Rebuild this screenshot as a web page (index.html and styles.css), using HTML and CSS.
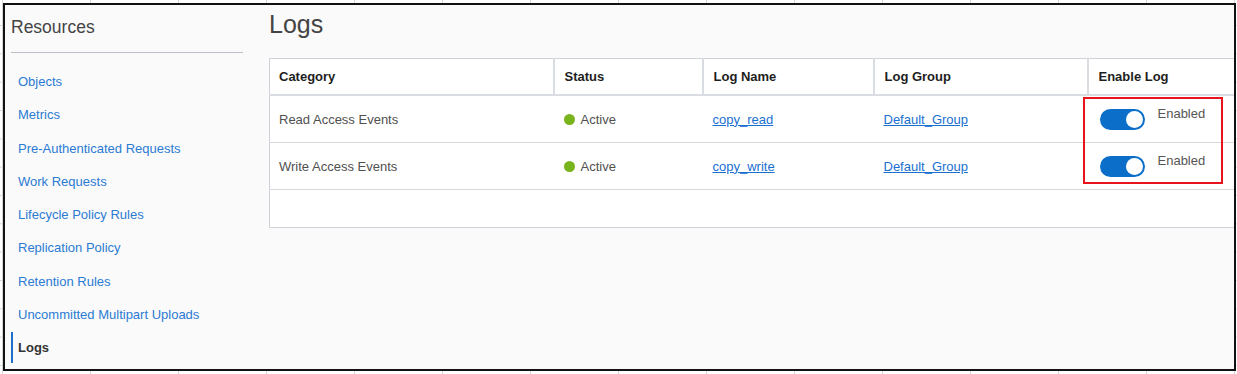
FILE: index.html
```html
<!DOCTYPE html>
<html lang="en">
<head>
  <meta charset="UTF-8">
  <title>Logs - Bucket Resources</title>
  <link rel="stylesheet" href="styles.css">
</head>
<body>
  <div class="frame">
    <!-- Resources side menu -->
    <aside class="sidebar">
      <h2 class="side-title">Resources</h2>
      <nav class="side-nav">
        <a href="#">Objects</a>
        <a href="#">Metrics</a>
        <a href="#">Pre-Authenticated Requests</a>
        <a href="#">Work Requests</a>
        <a href="#">Lifecycle Policy Rules</a>
        <a href="#">Replication Policy</a>
        <a href="#">Retention Rules</a>
        <a href="#">Uncommitted Multipart Uploads</a>
        <a href="#" class="active">Logs</a>
      </nav>
    </aside>

    <main class="main">
      <h1 class="page-title">Logs</h1>
      <table class="logs-table">
        <colgroup>
          <col class="c-cat">
          <col class="c-status">
          <col class="c-name">
          <col class="c-group">
          <col class="c-enable">
        </colgroup>
        <thead>
          <tr>
            <th>Category</th>
            <th>Status</th>
            <th>Log Name</th>
            <th>Log Group</th>
            <th>Enable Log</th>
          </tr>
        </thead>
        <tbody>
          <tr>
            <td>Read Access Events</td>
            <td><span class="dot"></span>Active</td>
            <td><a href="#">copy_read</a></td>
            <td><a href="#">Default_Group</a></td>
            <td>
              <div class="enable">
                <span class="toggle"><span class="knob"></span></span>
                <span class="enable-label">Enabled</span>
              </div>
            </td>
          </tr>
          <tr>
            <td>Write Access Events</td>
            <td><span class="dot"></span>Active</td>
            <td><a href="#">copy_write</a></td>
            <td><a href="#">Default_Group</a></td>
            <td>
              <div class="enable">
                <span class="toggle"><span class="knob"></span></span>
                <span class="enable-label">Enabled</span>
              </div>
            </td>
          </tr>
          <tr class="empty-row">
            <td colspan="5"></td>
          </tr>
        </tbody>
      </table>
    </main>

    <!-- highlight box drawn over the toggles -->
    <div class="highlight"></div>
  </div>
</body>
</html>
```

FILE: styles.css
```css
html, body {
  margin: 0;
  padding: 0;
}
body {
  width: 1237px;
  height: 374px;
  overflow: hidden;
  font-family: "Liberation Sans", Arial, sans-serif;
  background-color: #fff;
  background-image:
    linear-gradient(to right, #d6d6d6 1px, transparent 1px),
    linear-gradient(to bottom, #d6d6d6 1px, transparent 1px);
  background-size: 88px 100%, 100% 28.33px;
  background-position: 2px 0, 0 -3.3px;
}
.frame {
  position: relative;
  box-sizing: border-box;
  margin: 3px 0 0 3px;
  width: 1233px;
  height: 368px;
  border: 2px solid #111;
  background: #fafafa;
  display: flex;
  overflow: hidden;
}
.sidebar {
  width: 232px;
  margin-left: 6px;
  padding-top: 11px;
  flex-shrink: 0;
}
.side-title {
  margin: 0 0 14px;
  font-size: 17.5px;
  line-height: 22px;
  font-weight: normal;
  color: #444;
  border-bottom: 1px solid #bcc1c9;
  height: 37px;
  box-sizing: border-box;
  padding: 0;
}
.side-nav {
  margin-top: -2px;
}
.side-nav a {
  display: block;
  padding-left: 7px;
  font-size: 13px;
  line-height: 33.25px;
  color: #2b7bd3;
  text-decoration: none;
}
.side-nav a.active {
  color: #333;
  font-weight: bold;
  border-left: 2px solid #1f6fcf;
  padding-left: 5px;
  line-height: 31px;
  margin: 1.1px 0;
}
.main {
  flex: 1;
  margin-left: 26px;
  padding-top: 4px;
  overflow: hidden;
}
.page-title {
  margin: 0 0 19px;
  font-size: 25px;
  line-height: 30px;
  font-weight: normal;
  color: #444;
}
.logs-table {
  width: 1000px;
  table-layout: fixed;
  border-collapse: collapse;
  background: #fff;
  border-top: 1px solid #cfd3d9;
  border-left: 1px solid #cfd3d9;
  border-bottom: 1px solid #cfd3d9;
  font-size: 13px;
}
.c-cat { width: 284px; }
.c-status { width: 149px; }
.c-name { width: 171px; }
.c-group { width: 214px; }
.c-enable { width: 182px; }
.logs-table th {
  height: 35px;
  padding: 0 0 0 10px;
  text-align: left;
  font-weight: bold;
  color: #1e1e1e;
  border-bottom: 2px solid #d9dce1;
  border-left: 2px solid #d9dce1;
}
.logs-table th:first-child {
  border-left: none;
}
.logs-table td {
  height: 46px;
  padding: 0 0 0 10px;
  color: #505050;
  border-bottom: 1px solid #d5d8dd;
  vertical-align: middle;
}
.logs-table th:first-child,
.logs-table td:first-child {
  padding-left: 9px;
}
.logs-table .empty-row td {
  height: 37px;
  border-bottom: none;
}
.logs-table a {
  color: #1a6fcf;
  text-decoration: underline;
}
.dot {
  display: inline-block;
  width: 11px;
  height: 11px;
  border-radius: 50%;
  background: #7ab41d;
  margin-right: 6px;
  vertical-align: -1px;
}
.enable {
  display: flex;
  align-items: center;
  height: 46px;
  padding-left: 2px;
}
.toggle {
  position: relative;
  display: block;
  width: 45px;
  height: 21px;
  border-radius: 11px;
  background: #0b6fc9;
}
.knob {
  position: absolute;
  right: 2px;
  top: 2px;
  width: 17px;
  height: 17px;
  border-radius: 50%;
  background: #fff;
}
.enable-label {
  align-self: flex-start;
  margin: 10px 0 0 13px;
  line-height: 16px;
  color: #555;
}
.highlight {
  position: absolute;
  left: 1078px;
  top: 92px;
  width: 136px;
  height: 83px;
  border: 2px solid #e8141c;
}
```
